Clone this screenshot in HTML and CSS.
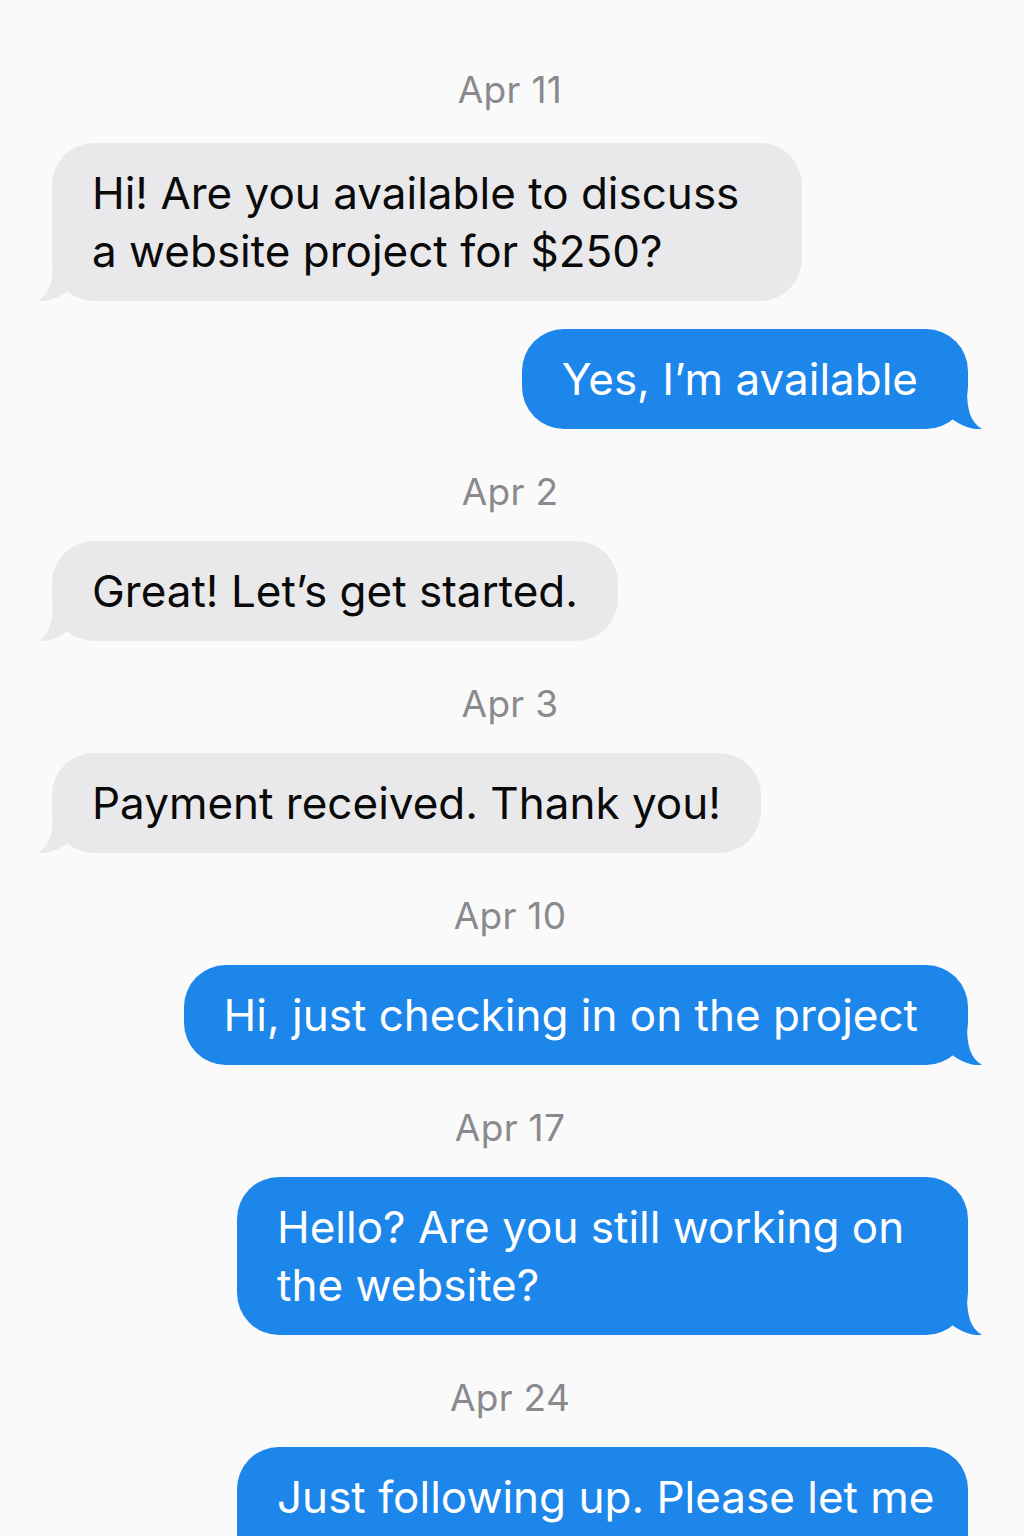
FILE: index.html
```html
<!DOCTYPE html>
<html lang="en">
<head>
<meta charset="utf-8">
<title>Messages</title>
<link rel="stylesheet" href="styles.css">
</head>
<body>
<main class="thread">
  <div class="date date-first">Apr 11</div>
  <div class="row row-in">
    <div class="bubble in w-750">Hi! Are you available to discuss<br>a website project for $250?</div>
  </div>
  <div class="row row-out gap-s">
    <div class="bubble out">Yes, I’m available</div>
  </div>

  <div class="date">Apr 2</div>
  <div class="row row-in">
    <div class="bubble in">Great! Let’s get started.</div>
  </div>

  <div class="date">Apr 3</div>
  <div class="row row-in">
    <div class="bubble in">Payment received. Thank you!</div>
  </div>

  <div class="date">Apr 10</div>
  <div class="row row-out">
    <div class="bubble out">Hi, just checking in on the project</div>
  </div>

  <div class="date">Apr 17</div>
  <div class="row row-out">
    <div class="bubble out w-731">Hello? Are you still working on<br>the website?</div>
  </div>

  <div class="date">Apr 24</div>
  <div class="row row-out">
    <div class="bubble out w-731">Just following up. Please let me<br>know if you have an update.</div>
  </div>
</main>
</body>
</html>
```

FILE: styles.css
```css
* { box-sizing: border-box; }

html, body {
  margin: 0;
  padding: 0;
  background: #fafafa;
}

body {
  font-family: Inter, "Noto Sans", "Liberation Sans", sans-serif;
  -webkit-font-smoothing: antialiased;
  overflow: hidden;
  height: 1536px;
}

.thread {
  display: flex;
  flex-direction: column;
  padding: 70px 56px 0 52px;
}

.date {
  height: 40px;
  line-height: 40px;
  margin: 43px 0 29px;
  text-align: center;
  font-size: 37px;
  color: #8a8a8e;
  letter-spacing: 0.3px;
}

.date-first {
  margin-top: 0;
  margin-bottom: 33px;
}

.row {
  display: flex;
}

.row-in { justify-content: flex-start; }
.row-out { justify-content: flex-end; }

.gap-s { margin-top: 28px; }

.bubble {
  position: relative;
  font-size: 44px;
  line-height: 58px;
  padding: 21px 40px 21px 40px;
  border-radius: 42px;
  white-space: nowrap;
}

.bubble.in {
  background: #e9e9eb;
  color: #0a0a0a;
}

.bubble.out {
  background: #1d86ea;
  color: #ffffff;
  padding-right: 50px;
}

.w-750 { width: 750px; }
.w-731 { width: 731px; }

.bubble::after {
  content: "";
  position: absolute;
  bottom: 0;
  width: 40px;
  height: 40px;
  clip-path: path("M 10 0 L 24 0 C 24 20 27 33 39 40 C 29 41 19 37 9 30 L 0 22 Z");
}

.bubble.out::after {
  right: -15px;
  background: #1d86ea;
}

.bubble.in::after {
  left: -15px;
  background: #e9e9eb;
  transform: scaleX(-1);
}
```
